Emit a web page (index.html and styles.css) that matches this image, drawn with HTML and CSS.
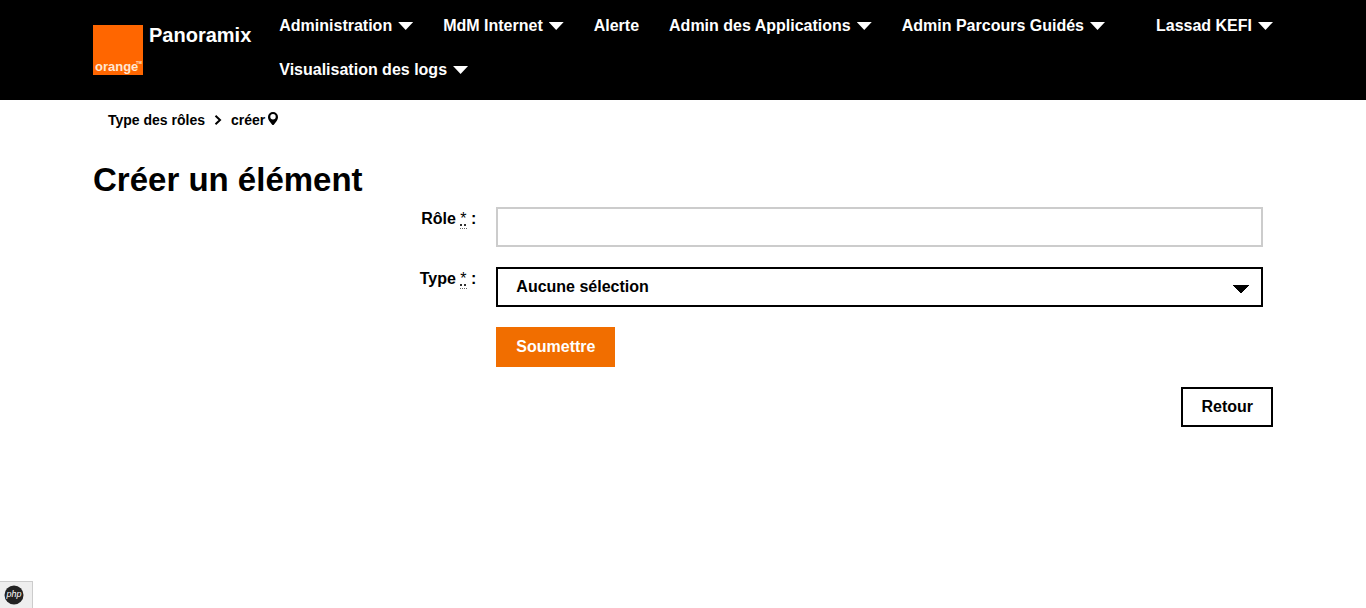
FILE: index.html
```html
<!DOCTYPE html>
<html lang="fr">
<head>
<meta charset="utf-8">
<meta name="viewport" content="width=device-width, initial-scale=1">
<title>Panoramix - Créer un élément</title>
<link rel="stylesheet" href="styles.css">
</head>
<body>
<header class="site-header">
  <div class="container header-inner">
    <a class="brand" href="#">
      <svg class="brand-logo" viewBox="0 0 50 50" role="img" aria-label="orange">
        <rect width="50" height="50" fill="#ff6600"/>
        <text x="2" y="46" class="logo-text">orange</text>
        <text x="43" y="39" class="logo-mark">TM</text>
      </svg>
      <span class="brand-name">Panoramix</span>
    </a>
    <nav class="main-nav" aria-label="Navigation principale">
      <a class="nav-link" href="#">Administration<span class="caret"></span></a>
      <a class="nav-link" href="#">MdM Internet<span class="caret"></span></a>
      <a class="nav-link" href="#">Alerte</a>
      <a class="nav-link" href="#">Admin des Applications<span class="caret"></span></a>
      <a class="nav-link" href="#">Admin Parcours Guidés<span class="caret"></span></a>
      <a class="nav-link" href="#">Visualisation des logs<span class="caret"></span></a>
    </nav>
    <a class="nav-link" href="#">Lassad KEFI<span class="caret"></span></a>
  </div>
</header>
<main class="container">
  <nav class="breadcrumb" aria-label="Fil d'Ariane">
    <a class="crumb" href="#">Type des rôles</a>
    <svg class="crumb-arrow" viewBox="0 0 8 10" aria-hidden="true"><path d="M1.500 .8 6 5 1.500 9.200" fill="none" stroke="#000" stroke-width="2"/></svg>
    <a class="crumb" href="#">créer<svg class="pin" viewBox="0 0 10 13" aria-hidden="true"><path fill-rule="evenodd" d="M5 0a5 5 0 0 1 5 5c0 1.600-.5 2.600-1.300 4L6 12.500a1.200 1.200 0 0 1-2 0L1.300 9C.5 7.600 0 6.600 0 5a5 5 0 0 1 5-5Zm0 2a2.700 2.700 0 1 0 0 5.400A2.700 2.700 0 0 0 5 2Z"/></svg></a>
  </nav>
  <h1 class="page-title">Créer un élément</h1>
  <form class="role-form">
    <label class="field-label" for="role">Rôle <abbr class="required" title="Obligatoire">*</abbr> :</label>
    <div class="field"><input class="control text-input" id="role" type="text"></div>
    <label class="field-label" for="type">Type <abbr class="required" title="Obligatoire">*</abbr> :</label>
    <div class="field">
      <select class="control select" id="type"><option>Aucune sélection</option></select>
    </div>
    <div class="field form-submit"><button class="btn btn-primary" type="submit">Soumettre</button></div>
  </form>
  <div class="page-actions"><a class="btn btn-outline" href="#">Retour</a></div>
</main>
<button class="debug-badge" type="button" aria-label="Barre de débogage PHP">
  <svg class="php-logo" viewBox="0 0 20 20" aria-hidden="true">
    <circle cx="10" cy="10" r="9.500" fill="#222"/>
    <text x="10" y="12" text-anchor="middle" class="php-text">php</text>
  </svg>
</button>
</body>
</html>
```
FILE: styles.css
```css
* { box-sizing: border-box; }

body {
  margin: 0;
  background: #fff;
  color: #000;
  font: bold 16px/20px "Liberation Sans", Arial, sans-serif;
}

a { color: inherit; text-decoration: none; }

.container {
  max-width: 1200px;
  margin: 0 auto;
  padding: 0 10px;
}

.site-header { background: #000; color: #fff; }

.header-inner {
  display: flex;
  align-items: flex-start;
  gap: 28px;
  padding-top: 16px;
  padding-bottom: 20px;
}

.brand {
  display: flex;
  flex: none;
  gap: 6px;
  padding-top: 9px;
}

.brand-logo { width: 50px; height: 50px; }
.brand-name { font-size: 20px; }
.logo-text { fill: #ffe6d2; font-size: 13px; }
.logo-mark { fill: #ffe6d2; font-size: 4px; }

.main-nav {
  display: flex;
  flex: 1;
  flex-wrap: wrap;
  gap: 24px 30px;
}

.nav-link {
  display: flex;
  flex: none;
  align-items: center;
  gap: 6px;
}

.caret {
  width: 15px;
  height: 8px;
  background: currentColor;
  clip-path: polygon(0 0, 100% 0, 50% 100%);
}

.breadcrumb {
  display: flex;
  align-items: center;
  gap: 9px;
  padding: 10px 15px;
  font-size: 14px;
}

.crumb { display: flex; align-items: center; }
.crumb-arrow { width: 8px; height: 10px; }
.pin { width: 10px; height: 13px; margin: 0 0 3px 3px; }

.page-title {
  margin: 20px 0 7px;
  font-size: 33px;
  line-height: 40px;
}

.role-form {
  display: grid;
  grid-template-columns: 1fr 2fr;
  row-gap: 20px;
}

.field-label { padding: 2px 10px; text-align: right; }
.field { padding: 0 10px; }
.form-submit { grid-column: 2; }

.required {
  padding-bottom: 1px;
  border-bottom: 1px dotted #666;
  font-weight: normal;
  text-decoration: underline dotted;
}

.control {
  display: block;
  width: 100%;
  height: 40px;
  margin: 0;
  padding: 0 18px;
  border: 2px solid #ccc;
  border-radius: 0;
  background: #fff;
  color: #000;
  font: inherit;
}

.select {
  appearance: none;
  border-color: #000;
  background-image:
    linear-gradient(to top right, transparent 50%, #000 50%),
    linear-gradient(to top left, transparent 50%, #000 50%);
  background-position: right 20px top 16px, right 12px top 16px;
  background-repeat: no-repeat;
  background-size: 8px 8px;
}

.btn {
  display: inline-block;
  padding: 8px 18px;
  border: 2px solid #000;
  font: inherit;
}

.btn-primary { display: block; border-color: #f16e00; background: #f16e00; color: #fff; }
.btn-outline { background: #fff; }

.page-actions {
  display: flex;
  justify-content: flex-end;
  margin-top: 20px;
}

.debug-badge {
  position: fixed;
  bottom: 0;
  left: 0;
  display: flex;
  padding: 3px 8px 3px 4px;
  border: 1px solid #ccc;
  border-width: 1px 1px 0 0;
  background: #eee;
}

.php-logo { width: 20px; height: 20px; }
.php-text { fill: #fff; font: italic 9px "Liberation Sans", Arial, sans-serif; }
```
